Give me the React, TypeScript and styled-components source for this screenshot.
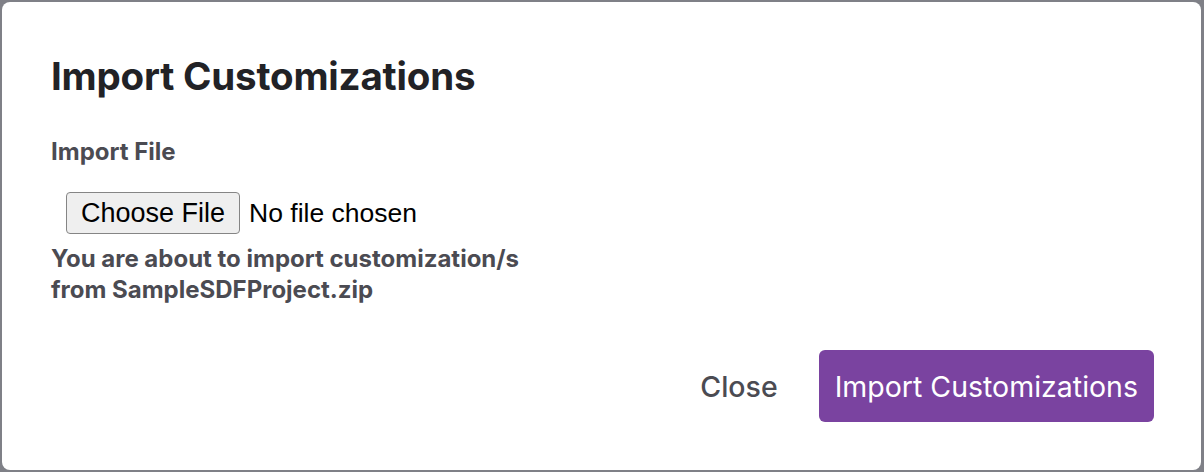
import styled, { createGlobalStyle } from "styled-components";

const GlobalStyle = createGlobalStyle`
  html, body {
    margin: 0;
    padding: 0;
    height: 100%;
  }
  body {
    background: #7f8087;
    font-family: Inter, "Noto Sans", sans-serif;
  }
  #root {
    height: 100%;
  }
`;

const Screen = styled.div`
  height: 100%;
  box-sizing: border-box;
  padding: 2px 3px 2px 2px;
  display: flex;
`;

const Modal = styled.div`
  flex: 1;
  background: #ffffff;
  border-radius: 8px;
  padding: 48px 47px 0 49px;
  display: flex;
  flex-direction: column;
`;

const Title = styled.h1`
  margin: 0;
  font-size: 38.5px;
  line-height: 52px;
  font-weight: 700;
  color: #222226;
  letter-spacing: -0.2px;
`;

const Label = styled.div`
  margin-top: 35px;
  font-size: 24px;
  line-height: 30px;
  font-weight: 700;
  color: #4b4b52;
`;

const FileInput = styled.input`
  margin: 25px 0 0 15px;
  font-family: Helvetica, "Liberation Sans", Arial, sans-serif;
  font-size: 26.5px;
  color: #000;
  height: 42px;
  align-self: flex-start;

  &::file-selector-button {
    font-family: inherit;
    font-size: 27px;
    height: 42px;
    padding: 0 14px;
    margin-right: 9px;
    background: #efefef;
    border: 1px solid #858585;
    border-radius: 4px;
    color: #000;
  }
`;

const Notice = styled.p`
  margin: 9px 0 0;
  font-size: 24px;
  line-height: 31px;
  font-weight: 700;
  color: #4b4b52;
  width: 500px;
`;

const Footer = styled.div`
  margin-top: 45px;
  display: flex;
  justify-content: flex-end;
  align-items: center;
  gap: 41px;
`;

const Button = styled.button<{ $primary?: boolean }>`
  font-family: Inter, "Noto Sans", sans-serif;
  font-size: 28.5px;
  height: 72px;
  border: none;
  border-radius: 6px;
  cursor: pointer;
  padding: ${(p) => (p.$primary ? "0 16px" : "0")};
  background: ${(p) => (p.$primary ? "#7a43a0" : "transparent")};
  color: ${(p) => (p.$primary ? "#ffffff" : "#4b4b52")};
  font-weight: ${(p) => (p.$primary ? 400 : 500)};
`;

export default function App() {
  return (
    <>
      <GlobalStyle />
      <Screen>
        <Modal>
          <Title>Import Customizations</Title>
          <Label>Import File</Label>
          <FileInput type="file" />
          <Notice>
            You are about to import customization/s from SampleSDFProject.zip
          </Notice>
          <Footer>
            <Button>Close</Button>
            <Button $primary>Import Customizations</Button>
          </Footer>
        </Modal>
      </Screen>
    </>
  );
}
